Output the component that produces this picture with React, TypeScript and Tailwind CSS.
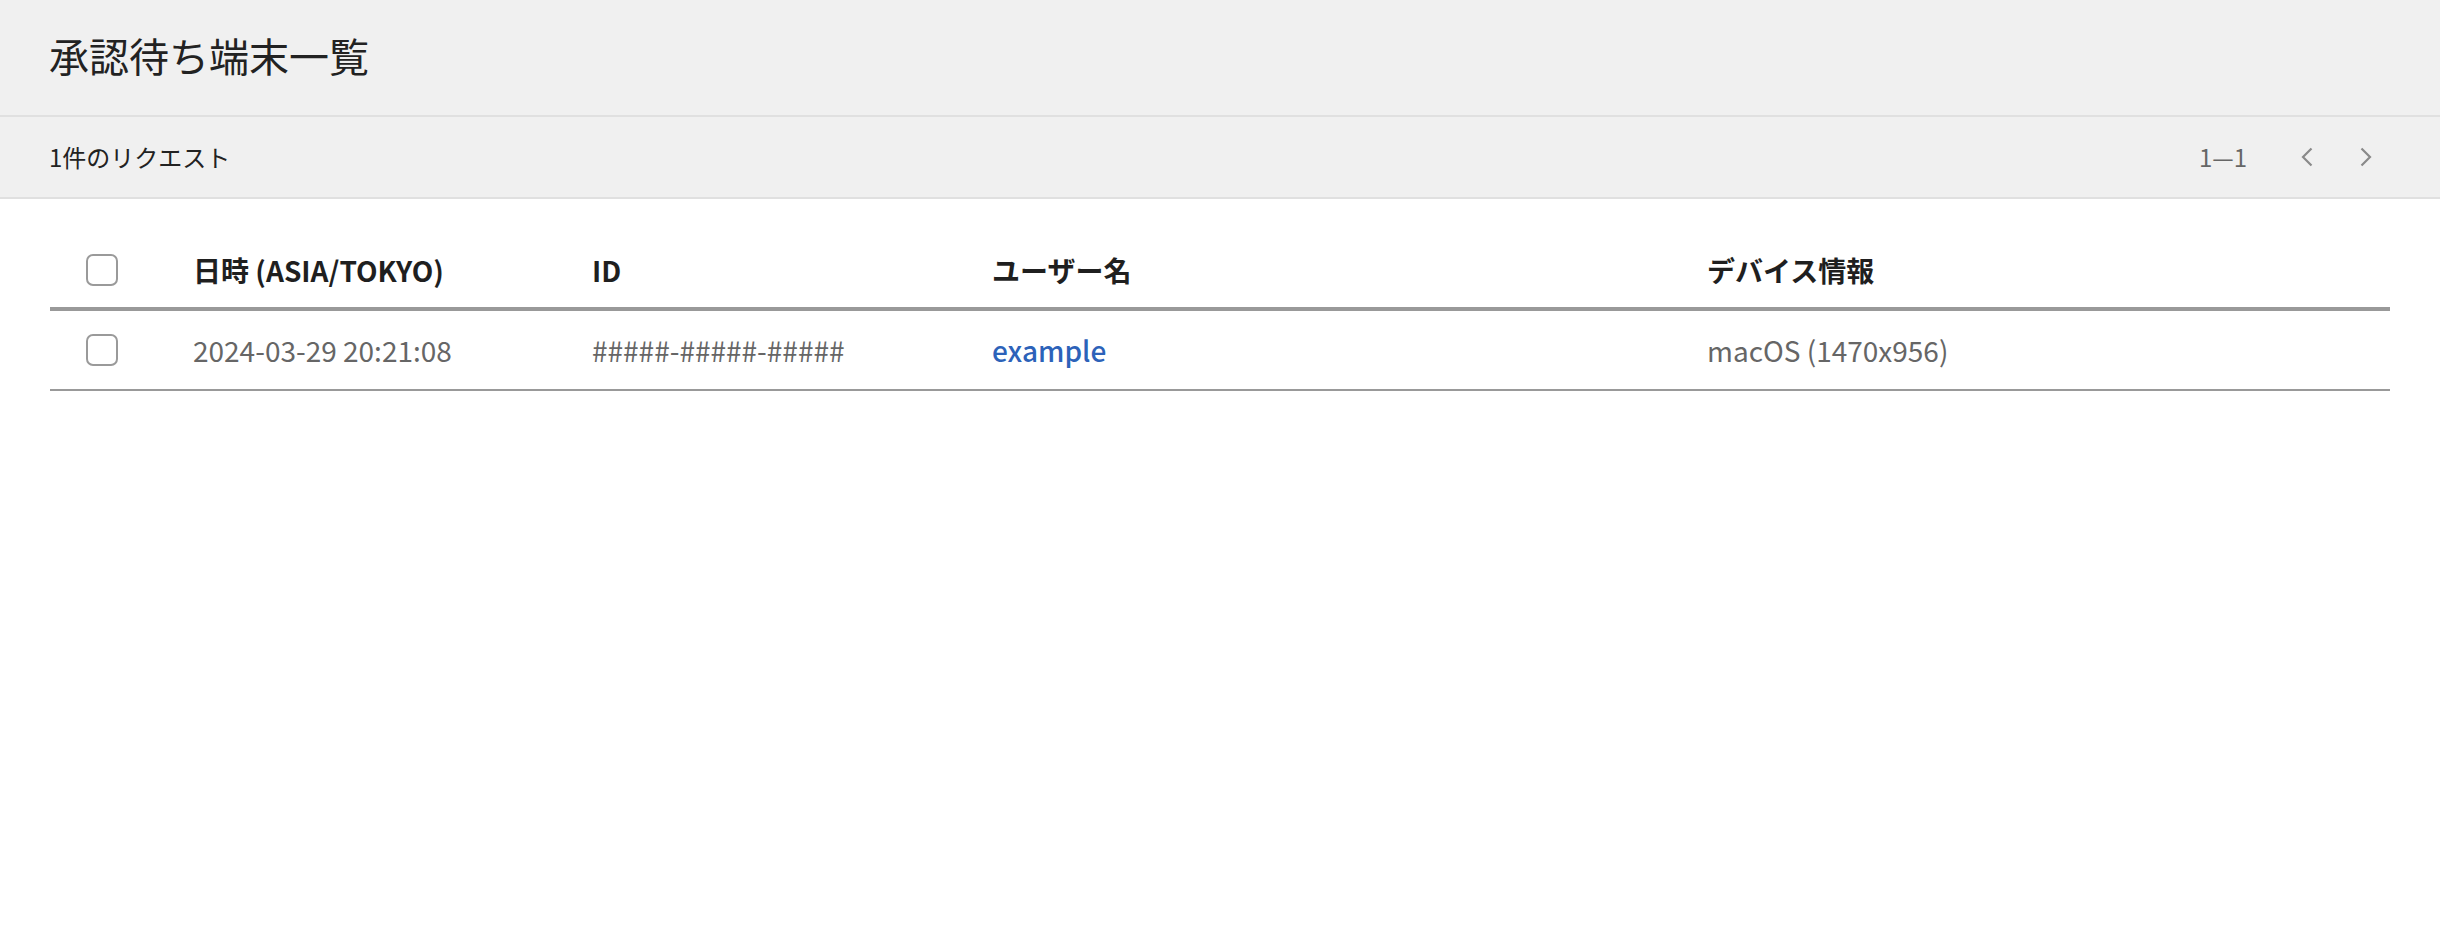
import React from 'react';

const font = { fontFamily: '"Noto Sans CJK JP", "Noto Sans", sans-serif' };

function Checkbox() {
  return <div className="w-[32px] h-[32px] rounded-[7px] border-2 border-[#9a9a9a] bg-white" />;
}

function Chevron({ dir }: { dir: 'left' | 'right' }) {
  return (
    <svg width="12" height="20" viewBox="0 0 12 20" fill="none" stroke="#8a8a8a" strokeWidth="2.2">
      {dir === 'left' ? <path d="M10.5 1.5 L2 10 L10.5 18.5" /> : <path d="M1.5 1.5 L10 10 L1.5 18.5" />}
    </svg>
  );
}

export default function App() {
  const cols = 'grid grid-cols-[143px_399px_400px_715px_1fr] items-center';

  return (
    <div className="min-h-screen w-full bg-white text-[#1f1f1f]" style={font}>
      {/* Title bar */}
      <div className="h-[117px] bg-[#f0f0f0] border-b-2 border-[#e0e0e0] flex items-center px-[49px] pb-[5px]">
        <h1 className="text-[40px] font-normal text-[#222] leading-none">承認待ち端末一覧</h1>
      </div>

      {/* Sub header */}
      <div className="h-[82px] bg-[#f0f0f0] border-b-2 border-[#e0e0e0] flex items-center justify-between pl-[49px] pr-[68px]">
        <span className="text-[24px] text-[#222]">1件のリクエスト</span>
        <div className="flex items-center">
          <span className="text-[24px] text-[#666] mr-[54px]">1—1</span>
          <button className="mr-[47px] flex items-center"><Chevron dir="left" /></button>
          <button className="flex items-center"><Chevron dir="right" /></button>
        </div>
      </div>

      {/* Table */}
      <div className="mx-[50px] mt-[33px]">
        <div className={`${cols} h-[79px] border-b-4 border-[#999]`}>
          <div className="pl-[36px]"><Checkbox /></div>
          <div className="text-[28px] font-bold">日時 (ASIA/TOKYO)</div>
          <div className="text-[28px] font-bold">ID</div>
          <div className="text-[28px] font-bold">ユーザー名</div>
          <div className="text-[28px] font-bold">デバイス情報</div>
        </div>
        <div className={`${cols} h-[80px] border-b-2 border-[#999] text-[28px] text-[#666]`}>
          <div className="pl-[36px]"><Checkbox /></div>
          <div>2024-03-29 20:21:08</div>
          <div>#####-#####-#####</div>
          <div><a className="text-[#2c62b9] font-medium">example</a></div>
          <div>macOS (1470x956)</div>
        </div>
      </div>
    </div>
  );
}
